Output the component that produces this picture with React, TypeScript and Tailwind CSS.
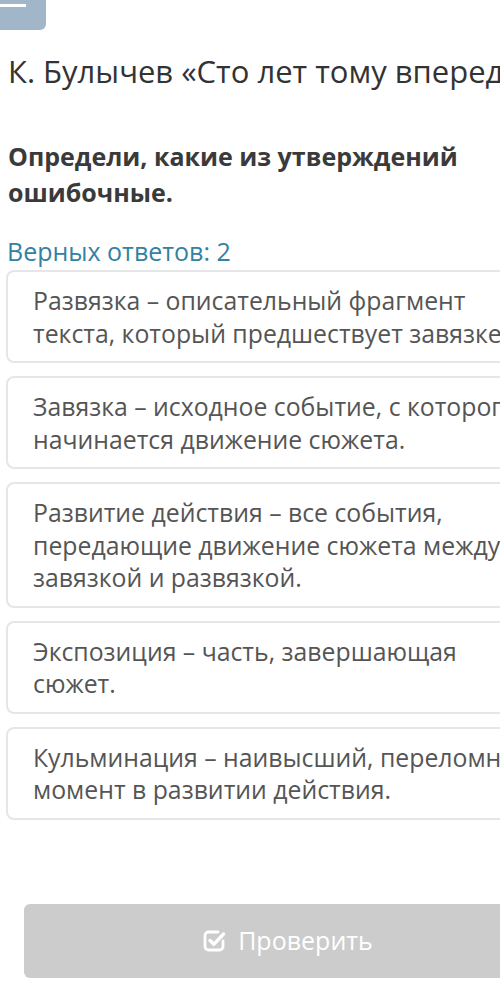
const statements = [
  "Развязка – описательный фрагмент текста, который предшествует завязке.",
  "Завязка – исходное событие, с которого начинается движение сюжета.",
  "Развитие действия – все события, передающие движение сюжета между завязкой и развязкой.",
  "Экспозиция – часть, завершающая сюжет.",
  "Кульминация – наивысший, переломный момент в развитии действия.",
];

const CheckSquareIcon = () => (
  <svg
    viewBox="0 0 24 24"
    className="size-[24px]"
    fill="none"
    stroke="currentColor"
    strokeLinecap="round"
    strokeLinejoin="round"
  >
    <path d="M16 3H6.5A3.5 3.5 0 0 0 3 6.5v11A3.5 3.5 0 0 0 6.5 21h11a3.5 3.5 0 0 0 3.5-3.5V12" strokeWidth={2.8} />
    <path d="M8 11.5l3.8 3.8L21.5 5" strokeWidth={3.4} />
  </svg>
);

const StatementCard = ({ text }: { text: string }) => (
  <div className="w-[562px] rounded-lg border-2 border-[#e6e6e6] bg-white py-[12px] pl-[25px] pr-[25px]">
    <p className="text-[24.8px] leading-[32.5px] text-[#555555]">{text}</p>
  </div>
);

export default function App() {
  return (
    <div
      className="relative h-[989px] w-[500px] overflow-hidden bg-white"
      style={{ fontFamily: '"Open Sans", "Noto Sans", sans-serif' }}
    >
      <div className="h-[30px] w-[46px] rounded-br-[6px] bg-[#a2b6c9] pt-[4px]">
        <div className="h-[3px] w-[26px] bg-white" />
      </div>

      <h1 className="mt-[21px] whitespace-nowrap pl-[8px] text-[31px] leading-[40px] text-[#333333]">
        К. Булычев «Сто лет тому вперед»
      </h1>

      <h2 className="mt-[47px] w-[490px] pl-[8px] text-[25px] font-bold leading-[36px] text-[#3a3a3a]">
        Определи, какие из утверждений ошибочные.
      </h2>

      <p className="mt-[24px] pl-[7px] text-[25px] leading-[34px] text-[#3381a3]">
        Верных ответов: 2
      </p>

      <div className="mt-[2px] ml-[6px] flex flex-col gap-[13px]">
        {statements.map((s) => (
          <StatementCard key={s} text={s} />
        ))}
      </div>

      <button className="mt-[84px] ml-[24px] flex h-[74px] w-[527px] items-center justify-center gap-[12px] rounded-md bg-[#cccccc] text-[25px] text-white">
        <CheckSquareIcon />
        Проверить
      </button>
    </div>
  );
}
